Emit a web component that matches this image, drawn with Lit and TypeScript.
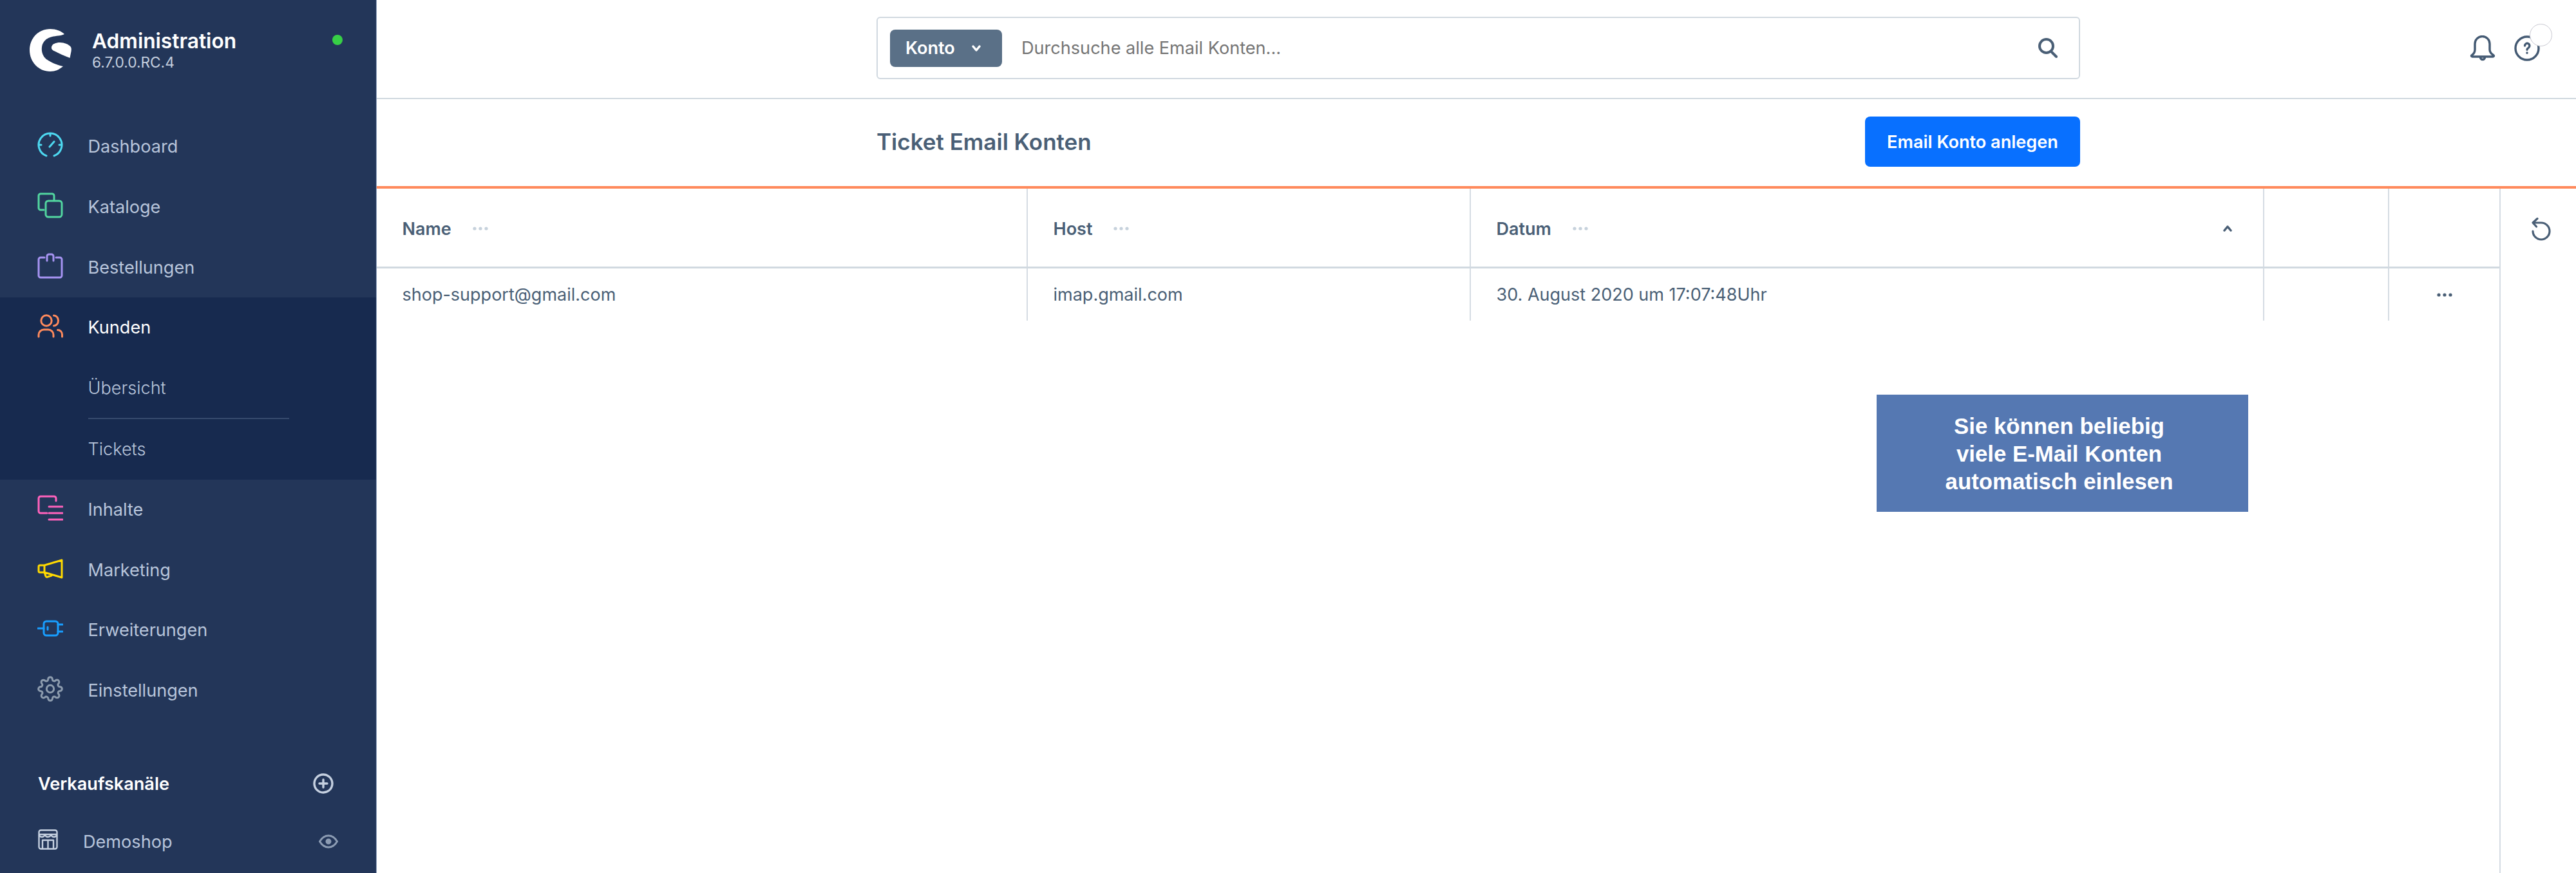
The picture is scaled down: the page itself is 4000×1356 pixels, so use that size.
import { LitElement, html, css, svg } from "lit";
import { customElement } from "lit/decorators.js";

const gear = "M19.4 15a1.65 1.65 0 0 0 .33 1.82l.06.06a2 2 0 0 1 0 2.83 2 2 0 0 1-2.83 0l-.06-.06a1.65 1.65 0 0 0-1.82-.33 1.65 1.65 0 0 0-1 1.51V21a2 2 0 0 1-2 2 2 2 0 0 1-2-2v-.09A1.65 1.65 0 0 0 9 19.4a1.65 1.65 0 0 0-1.82.33l-.06.06a2 2 0 0 1-2.83 0 2 2 0 0 1 0-2.83l.06-.06a1.65 1.65 0 0 0 .33-1.82 1.65 1.65 0 0 0-1.51-1H3a2 2 0 0 1-2-2 2 2 0 0 1 2-2h.09A1.65 1.65 0 0 0 4.6 9a1.65 1.65 0 0 0-.33-1.82l-.06-.06a2 2 0 0 1 0-2.83 2 2 0 0 1 2.83 0l.06.06a1.65 1.65 0 0 0 1.82.33H9a1.65 1.65 0 0 0 1-1.51V3a2 2 0 0 1 2-2 2 2 0 0 1 2 2v.09a1.65 1.65 0 0 0 1 1.51 1.65 1.65 0 0 0 1.82-.33l.06-.06a2 2 0 0 1 2.83 0 2 2 0 0 1 0 2.83l-.06.06a1.65 1.65 0 0 0-.33 1.82V9a1.65 1.65 0 0 0 1.51 1H21a2 2 0 0 1 2 2 2 2 0 0 1-2 2h-.09a1.65 1.65 0 0 0-1.51 1z";

const icons: Record<string, unknown> = {
  dash: svg`<path d="M14 37A18 18 0 1 1 26 37M20 2v4M2 20h4M34 20h4M19 23L26 15"/>`,
  cat: svg`<path d="M10 27H5a3 3 0 0 1-3-3V5a3 3 0 0 1 3-3h18a3 3 0 0 1 3 3v7"/><rect x="13" y="13" width="25" height="25" rx="4"/>`,
  bag: svg`<path d="M11 7H5a3 3 0 0 0-3 3v25a3 3 0 0 0 3 3h30a3 3 0 0 0 3-3V10a3 3 0 0 0-3-3h-6M15 12V5a3 3 0 0 1 3-3h4a3 3 0 0 1 3 3v7"/>`,
  users: svg`<circle cx="14" cy="12" r="8.200"/><path d="M25.500 4a7 8 0 0 1 0 16M2 37v-3a8 8 0 0 1 8-8h7a8 8 0 0 1 8 8v3M31.500 26.500a7 7 0 0 1 7 7V37"/>`,
  content: svg`<path d="M29 9V5a3 3 0 0 0-3-3H5a3 3 0 0 0-3 3v20a3 3 0 0 0 3 3h10M18 18h21M18 28h21M18 38h21"/>`,
  mega: svg`<path d="M11 15H4a2 2 0 0 0-2 2v7a2 2 0 0 0 2 2h7zM11 15l27-8v27l-27-8M11 26l2 6a2 2 0 0 0 3 1l6-2"/>`,
  plug: svg`<rect x="10" y="9" width="22" height="22" rx="4"/><path d="M1 20h9M32 14h7M32 25h7M16 18v4"/>`,
};

const nav = [
  { label: "Dashboard", icon: "dash", color: "#4dd8f0" },
  { label: "Kataloge", icon: "cat", color: "#52d6a0" },
  { label: "Bestellungen", icon: "bag", color: "#a693f2" },
];
const nav2 = [
  { label: "Inhalte", icon: "content", color: "#ff62bc" },
  { label: "Marketing", icon: "mega", color: "#ffd900" },
  { label: "Erweiterungen", icon: "plug", color: "#189eff" },
];

function navIcon(name: string, color: string) {
  return html`<svg class="nav-icon" viewBox="0 0 40 40" style="color:${color}">${icons[name]}</svg>`;
}

@customElement("app-root")
export class AppRoot extends LitElement {
  static styles = css`
    :host { display: block; width: 4000px; height: 1356px; overflow: hidden; background: #fff; font-family: Inter, "Liberation Sans", sans-serif; }
    .app { position: relative; display: flex; width: 4000px; height: 1356px; }
    .side { flex: none; width: 585px; height: 100%; box-sizing: border-box; background: #233659; border-right: 1px solid #8ea0bd; display: flex; flex-direction: column; }
    .brand { height: 181px; flex: none; box-sizing: border-box; display: flex; align-items: flex-start; padding: 45px 52px 0 45px; color: #fff; }
    .logo { width: 66px; height: 66px; flex: none; }
    .brand-text { margin-left: 32px; flex: 1; }
    .brand-name { font-size: 31.7px; font-weight: 600; line-height: 38px; }
    .brand-ver { font-size: 22.7px; line-height: 26px; color: #c5cfdf; margin-top: 1px; }
    .dot { width: 16px; height: 16px; border-radius: 50%; background: #37d046; margin-top: 9px; }
    .row { height: 93.67px; display: flex; align-items: center; padding-left: 58px; box-sizing: border-box; font-size: 27.1px; color: #b8c5db; flex: none; }
    .nav-icon { width: 40px; height: 40px; flex: none; margin-right: 38.5px; margin-bottom: 5px; fill: none; stroke: currentColor; stroke-width: 3; stroke-linecap: round; stroke-linejoin: round; }
    .active { background: #172a4f; }
    .active .row.on { color: #fff; }
    .sub { padding-left: 136.5px; display: flex; flex-direction: column; height: 189px; }
    .sub div { flex: 1; display: flex; align-items: center; font-size: 27.1px; color: #b8c5db; font-weight: 300; }
    .sub .sep { height: 2px; width: 312px; background: #35496c; flex: none; }
    .channels { margin-top: 70px; padding: 0 66px 0 59px; height: 56px; display: flex; align-items: center; justify-content: space-between; color: #fff; font-size: 27.1px; font-weight: 600; flex: none; }
    .plus { width: 32px; height: 32px; fill: none; stroke: #c5d0e0; stroke-width: 3.4; stroke-linecap: round; }
    .shop { margin-top: 43px; padding: 0 59px; display: flex; align-items: center; color: #b8c5db; font-size: 27.1px; }
    .store { width: 31px; height: 32px; flex: none; margin-right: 39px; fill: none; stroke: #c5d0e0; stroke-width: 2.4; stroke-linejoin: round; margin-bottom: 6px; }
    .shop span { flex: 1; }
    .eye { width: 30px; height: 22px; fill: none; stroke: #8c9cb3; stroke-width: 3; }
    .main { flex: 1; min-width: 0; display: flex; flex-direction: column; }
    .top { height: 154px; flex: none; box-sizing: border-box; border-bottom: 2px solid #d1d9e0; padding: 26px 56px 0 776px; display: flex; align-items: flex-start; }
    .search { width: 1869px; height: 97px; box-sizing: border-box; border: 2px solid #d1d9e0; border-radius: 6px; display: flex; align-items: center; padding: 0 33px 0 19px; }
    .chip { width: 174px; height: 58px; box-sizing: border-box; border-radius: 8px; background: #5a7087; color: #fff; font-size: 27.1px; font-weight: 600; display: flex; align-items: center; padding-left: 24px; }
    .chip svg { width: 18px; height: 12px; margin-left: 24px; fill: none; stroke: #fff; stroke-width: 3.5; stroke-linecap: round; stroke-linejoin: round; }
    .ph { margin-left: 30px; flex: 1; font-size: 27.1px; color: #757575; font-weight: 400; }
    .glass { width: 30px; height: 31px; fill: none; stroke: #4a5f76; stroke-width: 4; stroke-linecap: round; }
    .actions { margin-left: auto; display: flex; position: relative; padding-top: 29px; gap: 29px; }
    .actions svg { fill: none; stroke: #445a73; stroke-width: 3.4; stroke-linecap: round; stroke-linejoin: round; }
    .bell { width: 40px; height: 40px; }
    .help { width: 40px; height: 40px; }
    .bubble { position: absolute; left: 93px; top: 11px; width: 35px; height: 35px; box-sizing: border-box; border-radius: 50%; background: #fff; border: 1.5px solid #c9c9d2; }
    .smart { height: 135px; flex: none; box-sizing: border-box; padding: 27px 770px 0 776px; display: flex; justify-content: space-between; align-items: flex-start; }
    .smart h1 { margin: 0; font-size: 35px; font-weight: 600; color: #4a5f76; line-height: 78px; }
    .btn { width: 334px; height: 78px; border-radius: 8px; background: #0870ff; color: #fff; font-size: 27.1px; font-weight: 600; display: flex; align-items: center; justify-content: center; }
    .bar { height: 4px; flex: none; background: #ff8a5c; }
    .content { flex: 1; display: flex; min-height: 0; }
    .table { width: 3296px; flex: none; font-size: 27px; color: #4a5f76; }
    .tr { display: grid; grid-template-columns: 1011px 688px 1232px 194px 171px; }
    .tr > div { box-sizing: border-box; border-right: 2px solid #d5dce3; padding-left: 39.5px; display: flex; align-items: center; }
    .tr > div:last-child { border-right: 0; }
    .head { height: 121px; border-bottom: 3px solid #d1d9e0; }
    .head > div { font-weight: 600; padding-top: 3px; }
    .body > div { height: 81px; }
    .dots { width: 24px; height: 6px; margin-left: 33px; fill: #c6d1dc; }
    .sort { margin-left: auto; margin-right: 46px; width: 18px; height: 12px; fill: none; stroke: #4a5f76; stroke-width: 3.5; stroke-linecap: round; stroke-linejoin: round; }
    .more { width: 24px; height: 6px; margin-left: 34px; fill: #4a5f76; }
    .tools { flex: 1; border-left: 2px solid #d5dce3; display: flex; justify-content: center; padding: 45px 0 0 9px; box-sizing: border-box; }
    .tools svg { width: 30px; height: 36px; fill: none; stroke: #4a5f76; stroke-width: 3.2; stroke-linecap: round; stroke-linejoin: round; }
    .callout { position: absolute; left: 2914px; top: 613px; width: 577px; height: 182px; box-sizing: border-box; padding-right: 10px; background: #5578b2; color: #fff; font-family: "Liberation Sans", Arial, sans-serif; font-weight: 700; font-size: 34.8px; line-height: 43px; text-align: center; display: flex; align-items: center; justify-content: center; }
  `;

  render() {
    const dots = html`<svg class="dots" viewBox="0 0 24 6"><circle cx="3" cy="3" r="2.6"/><circle cx="12" cy="3" r="2.6"/><circle cx="21" cy="3" r="2.6"/></svg>`;
    return html`<div class="app">
      <aside class="side">
        <div class="brand">
          <svg class="logo" viewBox="0 0 66 66"><path fill="#fff" d="M55 8C50 3 42 0 33 0 14 0 1 15 1 33s14 33 32 33c8 0 14-3 20-8-9-2-19-6-26-11-5-4-8-11-7-19 1-8 7-14 16-16 6-1.500 13-1 19-4z"/><path fill="#fff" d="M35 28c1-5 7-7 13-7 7 0 14 3 17 7 1 2 1 4 .5 7l-2 10c-8.500-3-16.500-7-23.500-10.500-4-1.500-5.500-3.500-5-6.500z"/></svg>
          <div class="brand-text"><div class="brand-name">Administration</div><div class="brand-ver">6.7.0.0.RC.4</div></div>
          <div class="dot"></div>
        </div>
        ${nav.map((n) => html`<div class="row">${navIcon(n.icon, n.color)}${n.label}</div>`)}
        <div class="active">
          <div class="row on">${navIcon("users", "#ff8a5c")}Kunden</div>
          <div class="sub"><div>Übersicht</div><div class="sep"></div><div>Tickets</div></div>
        </div>
        ${nav2.map((n) => html`<div class="row">${navIcon(n.icon, n.color)}${n.label}</div>`)}
        <div class="row"><svg class="nav-icon" viewBox="0 0 24 24" style="color:#8d9cae;stroke-width:1.8"><circle cx="12" cy="12" r="3.4"/><path d="${gear}"/></svg>Einstellungen</div>
        <div class="channels"><span>Verkaufskanäle</span><svg class="plus" viewBox="0 0 32 32"><circle cx="16" cy="16" r="14"/><path d="M16 10v12M10 16h12"/></svg></div>
        <div class="shop"><svg class="store" viewBox="0 0 31 32"><rect x="1.5" y="1.5" width="28" height="29" rx="3"/><path d="M1.5 8h28M1.5 9c2 4 7 4 9.300 0 2 4 7 4 9.400 0 2 4 7 4 9.300 0M7 30V17h17v13M15.500 17v13"/></svg><span>Demoshop</span><svg class="eye" viewBox="0 0 30 22"><path d="M1.500 11C5 5 10 2 15 2s10 3 13.500 9C25 17 20 20 15 20S5 17 1.500 11z"/><circle cx="15" cy="11" r="3" fill="#8c9cb3"/></svg></div>
      </aside>
      <main class="main">
        <div class="top">
          <div class="search">
            <div class="chip">Konto<svg viewBox="0 0 18 12"><path d="M4 3l5 6 5-6"/></svg></div>
            <div class="ph">Durchsuche alle Email Konten...</div>
            <svg class="glass" viewBox="0 0 30 31"><circle cx="12.500" cy="12.500" r="10.500"/><path d="M20 21l8 8"/></svg>
          </div>
          <div class="actions">
            <svg class="bell" viewBox="0 0 40 40"><path d="M3 31c3-2 5-5 5-9v-9a11.500 11.500 0 0 1 23 0v9c0 4 3 7 6 9 1 1 0 2-1 2H4c-1 0-2-1-1-2zM16.500 34a3.500 3.500 0 0 0 7 0"/></svg>
            <svg class="help" viewBox="0 0 40 40"><circle cx="20" cy="20" r="18"/><path d="M16.500 16a3.700 3.700 0 1 1 5.800 3.100c-1.400.9-2.300 1.600-2.300 3.200M20 27v.3"/></svg>
            <div class="bubble"></div>
          </div>
        </div>
        <div class="smart"><h1>Ticket Email Konten</h1><div class="btn">Email Konto anlegen</div></div>
        <div class="bar"></div>
        <div class="content">
          <div class="table">
            <div class="tr head">
              <div>Name${dots}</div><div>Host${dots}</div>
              <div>Datum${dots}<svg class="sort" viewBox="0 0 18 12"><path d="M4 9l5-6 5 6"/></svg></div>
              <div></div><div></div>
            </div>
            <div class="tr body">
              <div>shop-support@gmail.com</div><div>imap.gmail.com</div><div>30. August 2020 um 17:07:48Uhr</div><div></div>
              <div><svg class="more" viewBox="0 0 24 6"><circle cx="3" cy="3" r="2.600"/><circle cx="12" cy="3" r="2.600"/><circle cx="21" cy="3" r="2.600"/></svg></div>
            </div>
          </div>
          <div class="tools"><svg viewBox="0 0 30 36"><path d="M9 1.500L2 8l5.500 6M2.500 8H15a13 13 0 1 1-13 13"/></svg></div>
        </div>
      </main>
      <div class="callout"><div>Sie können beliebig<br />viele E-Mail Konten<br />automatisch einlesen</div></div>
    </div>`;
  }
}
